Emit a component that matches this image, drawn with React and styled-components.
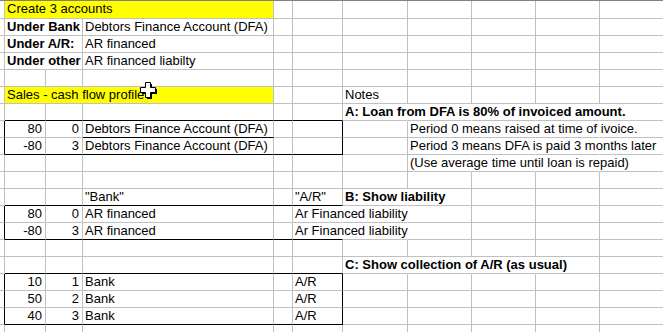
import React from "react";
import styled, { createGlobalStyle } from "styled-components";

const GlobalStyle = createGlobalStyle`
  html, body {
    margin: 0;
    padding: 0;
    background: #fff;
  }
  body {
    font-family: "Liberation Sans", Arial, sans-serif;
    overflow: hidden;
  }
`;

// column widths incl. the right gridline; col 0 is the gutter left of A
const COLS = [5, 41, 37, 191, 19, 50, 65, 64, 64, 64, 64];
const ROW_COUNT = 20;
const GRID = "#c0c0c0";
const INK = "#000";
const YELLOW = "#ffff00";

const num = { num: true };

// [row, col, text, options]
const entries = [
  [1, 1, "Create 3 accounts", { span: 3, fill: YELLOW }],
  [2, 1, "Under Bank", { bold: true, over: 2 }],
  [2, 3, "Debtors Finance Account (DFA)"],
  [3, 1, "Under A/R:", { bold: true, over: 2 }],
  [3, 3, "AR financed"],
  [4, 1, "Under other", { bold: true, over: 2 }],
  [4, 3, "AR financed liabilty"],
  [6, 1, "Sales - cash flow profile", { span: 3, fill: YELLOW }],
  [6, 6, "Notes"],
  [7, 6, "A: Loan from DFA is 80% of invoiced amount.", { bold: true, over: 5 }],
  [8, 1, "80", num],
  [8, 2, "0", num],
  [8, 3, "Debtors Finance Account (DFA)", { underline: true }],
  [8, 7, "Period 0 means raised at time of ivoice.", { over: 4 }],
  [9, 1, "-80", num],
  [9, 2, "3", num],
  [9, 3, "Debtors Finance Account (DFA)"],
  [9, 7, "Period 3 means DFA is paid 3 months later", { over: 4 }],
  [10, 7, "(Use average time until loan is repaid)", { over: 4 }],
  [12, 3, '"Bank"'],
  [12, 5, '"A/R"'],
  [12, 6, "B: Show liability", { bold: true, over: 2 }],
  [13, 1, "80", num],
  [13, 2, "0", num],
  [13, 3, "AR financed"],
  [13, 5, "Ar Financed liability", { over: 3 }],
  [14, 1, "-80", num],
  [14, 2, "3", num],
  [14, 3, "AR financed"],
  [14, 5, "Ar Financed liability", { over: 3 }],
  [16, 6, "C: Show collection of A/R (as usual)", { bold: true, over: 4 }],
  [17, 1, "10", num],
  [17, 2, "1", num],
  [17, 3, "Bank"],
  [17, 5, "A/R"],
  [18, 1, "50", num],
  [18, 2, "2", num],
  [18, 3, "Bank"],
  [18, 5, "A/R"],
  [19, 1, "40", num],
  [19, 2, "3", num],
  [19, 3, "Bank"],
  [19, 5, "A/R"],
];

// outlined ranges (thin black box)
const boxes = [
  { top: 8, bottom: 9, left: 1, right: 5 },
  { top: 13, bottom: 14, left: 1, right: 5 },
  { top: 17, bottom: 19, left: 1, right: 5 },
];

const Sheet = styled.div`
  position: relative;
  width: 663px;
  height: 332px;
  overflow: hidden;
  border-top: 1px solid #808080;
  box-sizing: border-box;
`;

const Grid = styled.div`
  display: grid;
  grid-template-columns: ${COLS.map((w) => `${w}px`).join(" ")};
  grid-template-rows: 18px repeat(${ROW_COUNT - 1}, 17px);
`;

const Cell = styled.div`
  box-sizing: border-box;
  grid-column: span ${({ $span }) => $span};
  border-right: 1px solid ${({ $right }) => $right};
  border-bottom: 1px solid ${({ $bottom }) => $bottom};
  background: ${({ $fill }) => $fill || "transparent"};
  color: #000;
  font-size: 13px;
  line-height: 16px;
  font-weight: ${({ $bold }) => ($bold ? 700 : 400)};
  text-align: ${({ $num }) => ($num ? "right" : "left")};
  padding: ${({ $num }) => ($num ? "0 3px 0 0" : "0 0 0 2px")};
  white-space: nowrap;
  overflow: visible;
  min-width: 0;
`;

const Cursor = styled.svg`
  position: absolute;
  left: 140px;
  top: 81px;
  pointer-events: none;
`;

const inBox = (r, c, b) => r >= b.top && r <= b.bottom && c >= b.left && c <= b.right;

const buildCells = () => {
  const lookup = {};
  const hideRight = new Set();
  entries.forEach(([r, c, text, opts = {}]) => {
    lookup[`${r}:${c}`] = { text, ...opts };
    if (opts.over) {
      for (let k = c; k < c + opts.over - 1; k++) hideRight.add(`${r}:${k}`);
    }
  });

  const out = [];
  for (let r = 1; r <= ROW_COUNT; r++) {
    let c = 0;
    while (c < COLS.length) {
      const e = lookup[`${r}:${c}`] || {};
      const span = e.span || 1;
      const end = c + span - 1;

      let right = GRID;
      boxes.forEach((b) => {
        if (r >= b.top && r <= b.bottom && (end === b.left - 1 || end === b.right)) right = INK;
      });
      if (hideRight.has(`${r}:${end}`)) right = "transparent";

      let bottom = GRID;
      boxes.forEach((b) => {
        if (c >= b.left && end <= b.right && (r === b.top - 1 || r === b.bottom)) bottom = INK;
      });
      if (e.underline) bottom = INK;

      out.push(
        <Cell
          key={`${r}:${c}`}
          $span={span}
          $right={right}
          $bottom={bottom}
          $fill={e.fill}
          $bold={e.bold}
          $num={e.num}
        >
          {e.text}
        </Cell>
      );
      c += span;
    }
  }
  return out;
};

const App = () => {
  return (
    <>
      <GlobalStyle />
      <Sheet>
        <Grid>{buildCells()}</Grid>
        <Cursor width="18" height="18" viewBox="0 0 18 18">
          <path d="M7 2h5v5h5v5h-5v5H7v-5H2V7h5z" fill="#000" />
          <path
            d="M5.5 0.5h5v5h5v5h-5v5h-5v-5h-5v-5h5z"
            fill="#fff"
            stroke="#000"
          />
        </Cursor>
      </Sheet>
    </>
  );
};

export default App;
